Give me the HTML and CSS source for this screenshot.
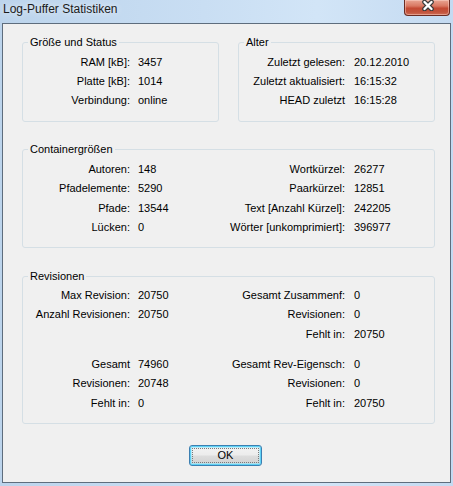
FILE: index.html
```html
<!DOCTYPE html>
<html lang="de">
<head>
<meta charset="utf-8">
<title>Log-Puffer Statistiken</title>
<link rel="stylesheet" href="styles.css">
</head>
<body>
<div class="window">
  <div class="titlebar">
    <span class="title">Log-Puffer Statistiken</span>
    <button class="close" type="button" aria-label="Schließen">
      <svg width="14" height="11" viewBox="0 0 14 11">
        <path d="M3.5 2 L10.5 9 M10.5 2 L3.5 9" stroke="#3b3b3b" stroke-width="4.6" stroke-linecap="round"/>
        <path d="M3.5 2 L10.5 9 M10.5 2 L3.5 9" stroke="#ffffff" stroke-width="2.4" stroke-linecap="round"/>
      </svg>
    </button>
  </div>
  <div class="client">
    <div class="toprow">
      <fieldset class="group g-top">
        <legend>Größe und Status</legend>
        <div class="grid grid2">
          <span class="l">RAM [kB]:</span><span class="v">3457</span>
          <span class="l">Platte [kB]:</span><span class="v">1014</span>
          <span class="l">Verbindung:</span><span class="v">online</span>
        </div>
      </fieldset>
      <fieldset class="group g-top">
        <legend>Alter</legend>
        <div class="grid grid2">
          <span class="l r">Zuletzt gelesen:</span><span class="v">20.12.2010</span>
          <span class="l r">Zuletzt aktualisiert:</span><span class="v">16:15:32</span>
          <span class="l r">HEAD zuletzt</span><span class="v">16:15:28</span>
        </div>
      </fieldset>
    </div>

    <fieldset class="group g-container">
      <legend>Containergrößen</legend>
      <div class="grid grid4">
        <span class="l">Autoren:</span><span class="v">148</span>
        <span class="l r">Wortkürzel:</span><span class="v">26277</span>
        <span class="l">Pfadelemente:</span><span class="v">5290</span>
        <span class="l r">Paarkürzel:</span><span class="v">12851</span>
        <span class="l">Pfade:</span><span class="v">13544</span>
        <span class="l r">Text [Anzahl Kürzel]:</span><span class="v">242205</span>
        <span class="l">Lücken:</span><span class="v">0</span>
        <span class="l r">Wörter [unkomprimiert]:</span><span class="v">396977</span>
      </div>
    </fieldset>

    <fieldset class="group g-rev">
      <legend>Revisionen</legend>
      <div class="grid grid4">
        <span class="l">Max Revision:</span><span class="v">20750</span>
        <span class="l r">Gesamt Zusammenf:</span><span class="v">0</span>
        <span class="l">Anzahl Revisionen:</span><span class="v">20750</span>
        <span class="l r">Revisionen:</span><span class="v">0</span>
        <span class="l"></span><span class="v"></span>
        <span class="l r">Fehlt in:</span><span class="v">20750</span>
        <div class="spacer"></div>
        <span class="l">Gesamt</span><span class="v">74960</span>
        <span class="l r">Gesamt Rev-Eigensch:</span><span class="v">0</span>
        <span class="l">Revisionen:</span><span class="v">20748</span>
        <span class="l r">Revisionen:</span><span class="v">0</span>
        <span class="l">Fehlt in:</span><span class="v">0</span>
        <span class="l r">Fehlt in:</span><span class="v">20750</span>
      </div>
    </fieldset>

    <div class="buttons">
      <button class="ok" type="button"><span class="focus">OK</span></button>
    </div>
  </div>
</div>
</body>
</html>
```

FILE: styles.css
```css
* { box-sizing: border-box; }

html, body {
  margin: 0;
  padding: 0;
}

body {
  width: 453px;
  height: 486px;
  overflow: hidden;
  background: linear-gradient(to right, #bcd4ec 0%, #c9def3 45%, #d2e5f7 70%, #c4daf1 100%);
  font-family: "Liberation Sans", Arial, sans-serif;
  font-size: 11px;
  color: #000;
}

.window {
  display: flex;
  flex-direction: column;
  height: 486px;
}

.titlebar {
  height: 23px;
  display: flex;
  justify-content: space-between;
  align-items: flex-start;
  flex: none;
}

.title {
  font-family: "Liberation Sans", Arial, sans-serif;
  font-size: 12px;
  line-height: 15px;
  padding: 2px 0 0 3px;
  color: #1b1b1b;
  text-shadow: 0 0 6px rgba(255, 255, 255, 0.9);
}

.close {
  width: 46px;
  height: 16px;
  margin: 0 3px 0 0;
  padding: 0;
  border: 1px solid #6a2b22;
  border-top: none;
  border-radius: 0 0 4px 4px;
  background: linear-gradient(#e9a593 0%, #d97862 40%, #c44a33 55%, #c2533c 80%, #cf6e56 100%);
  box-shadow: inset 0 0 0 1px rgba(255, 220, 210, 0.45);
  display: flex;
  justify-content: center;
  align-items: flex-start;
}

.close svg {
  display: block;
  margin-top: 0;
  margin-left: 2px;
}

.client {
  flex: none;
  margin: 0 2px 3px 2px;
  height: 460px;
  border: 1px solid #5e6d7d;
  background: #f0f0f0;
  padding: 12px 15px 0 19px;
  display: flex;
  flex-direction: column;
}

.toprow {
  display: grid;
  grid-template-columns: 197px 197px;
  column-gap: 19px;
}

.group {
  margin: 0;
  min-width: 0;
  border: 1px solid #d5dfe5;
  border-radius: 3px;
  padding: 0;
}

.group legend {
  margin-left: 5px;
  padding: 0 2px;
  line-height: 13px;
  font-size: 11px;
}

.g-top {
  padding: 4px 0 11px 0;
}

.g-container {
  margin-top: 21px;
  width: 413px;
  padding: 3.5px 0 9.5px 0;
}

.g-rev {
  margin-top: 22px;
  width: 413px;
  padding: 2.5px 0 10px 0;
}

.grid {
  display: grid;
  line-height: 19.5px;
  white-space: nowrap;
}

.g-top .grid {
  line-height: 19px;
}

.grid2 {
  grid-template-columns: 115px 1fr;
}

.grid4 {
  grid-template-columns: 115px 100px 116px 1fr;
}

.l {
  display: flex;
  justify-content: flex-end;
  padding-right: 8px;
  min-width: 0;
}

.l.r {
  padding-right: 9px;
}

.spacer {
  grid-column: 1 / -1;
  height: 10.5px;
}

.buttons {
  margin-top: 21px;
  display: flex;
  justify-content: center;
  padding-right: 6px;
}

.ok {
  width: 73px;
  height: 21px;
  padding: 2px;
  border: 1px solid #3c7fb1;
  border-radius: 3px;
  background: linear-gradient(#f3f3f3 0%, #ececec 48%, #dddddd 52%, #d0d0d0 100%);
  box-shadow: inset 0 0 0 1px #5fd2f6, inset 0 0 0 2px rgba(160, 230, 250, 0.6);
  font-family: "Liberation Sans", Arial, sans-serif;
  font-size: 11px;
  color: #000;
  display: flex;
}

.focus {
  flex: 1;
  display: flex;
  align-items: center;
  justify-content: center;
  border: 1px dotted #7a7a7a;
  line-height: 13px;
}
```
